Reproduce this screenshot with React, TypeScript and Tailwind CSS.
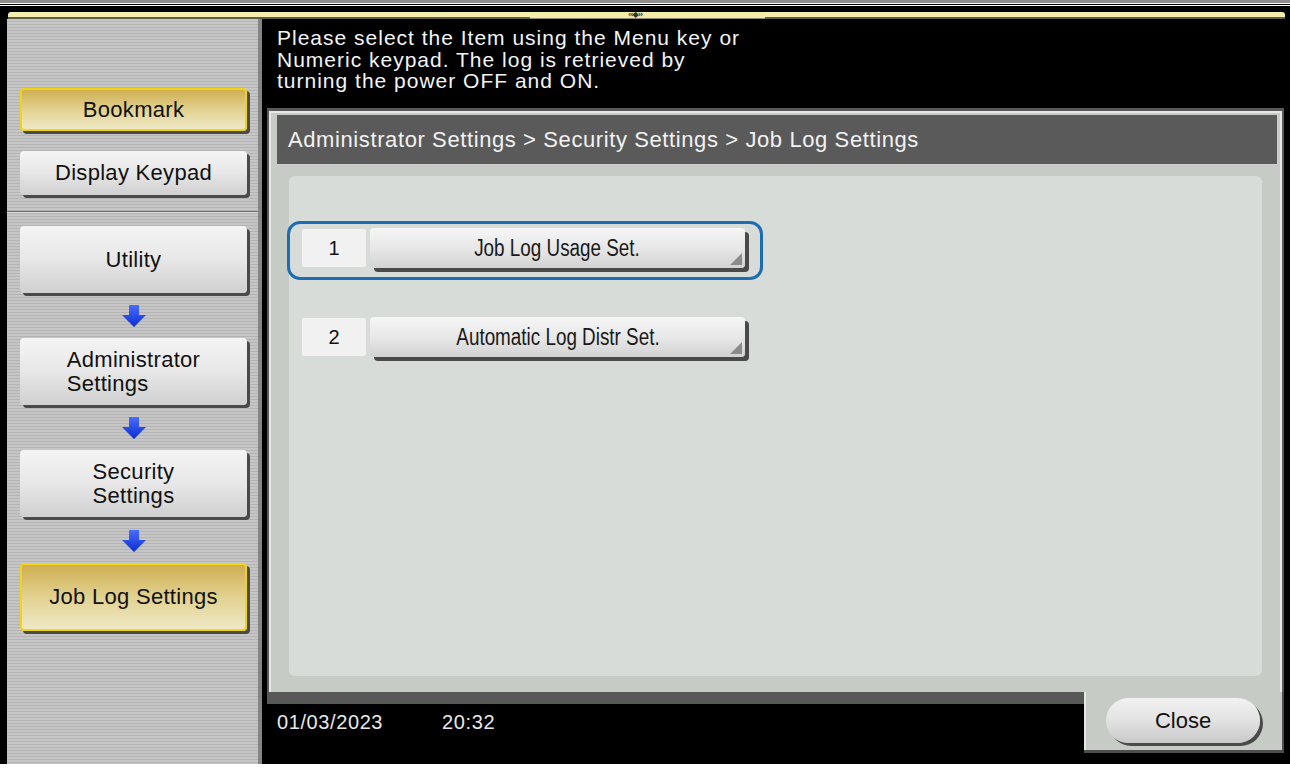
import React from 'react';

// left-hand navigation button (gray or highlighted yellow)
const NavButton = ({ children, yellow = false, h }: { children: React.ReactNode; yellow?: boolean; h: string }) => (
  <div
    className={`w-[227px] ${h} rounded-[4px] flex items-center justify-center text-[22px] leading-[24px] tracking-[0.3px] text-[#111] shadow-[3px_3px_0_#4a4a4a] ${
      yellow
        ? 'border-2 border-[#f2d417] bg-[linear-gradient(to_bottom,#cfae52_0%,#e2d290_50%,#eee8c6_100%)]'
        : 'bg-[linear-gradient(to_bottom,#f4f4f4_0%,#e7e7e7_50%,#d0d0d0_100%)]'
    }`}
  >
    {children}
  </div>
);

const DownArrow = () => (
  <div className="w-[227px] h-[45px] flex items-center justify-center">
    <svg width="24" height="22" viewBox="0 0 24 22">
      <defs>
        <linearGradient id="arr" x1="0" y1="0" x2="0" y2="1">
          <stop offset="0" stopColor="#4a6cff" />
          <stop offset="1" stopColor="#0a2ed0" />
        </linearGradient>
      </defs>
      <path d="M7 0h10v10h7L12 22 0 10h7z" fill="url(#arr)" />
    </svg>
  </div>
);

const ItemRow = ({ num, label, selected = false }: { num: string; label: string; selected?: boolean }) => (
  <div
    className={`-ml-[2px] w-[476px] h-[59px] rounded-[13px] border-[3px] flex items-start pl-[12px] pt-[4px] gap-[4px] ${
      selected ? 'border-[#1d6db4]' : 'border-transparent'
    }`}
  >
    <div className="mt-[1px] w-[64px] h-[38px] rounded-[2px] bg-[#f0f1f0] flex items-center justify-center text-[20px] text-[#111]">
      {num}
    </div>
    <div className="relative w-[375px] h-[40px] rounded-[4px] bg-[linear-gradient(to_bottom,#f6f6f6_0%,#e6e6e6_55%,#d2d2d2_100%)] shadow-[4px_4px_0_#4a4a4a] flex items-center justify-center">
      <span className="inline-block scale-x-[0.82] text-[23px] text-[#1a1a1a] whitespace-nowrap">{label}</span>
      <svg className="absolute right-[3px] bottom-[3px]" width="12" height="12" viewBox="0 0 12 12">
        <polygon points="12,0 12,12 0,12" fill="#8c8c8c" />
      </svg>
    </div>
  </div>
);

export default function App() {
  return (
    <div className="w-[1290px] h-[779px] bg-white overflow-hidden font-['Liberation_Sans',Arial,sans-serif]">
      {/* top edge lines */}
      <div className="h-[3px] bg-[#8e8e8e]" />
      <div className="h-px bg-white" />
      <div className="h-px bg-black" />
      <div className="h-px bg-white" />

      <div className="h-[758px] bg-black pl-[7px] pr-[6px] flex flex-col">
        {/* yellow strip with centre tab */}
        <div className="mt-[6px] ml-[1px] -mr-[1px] h-[7px] flex">
          <div className="w-[522px] flex flex-col">
            <div className="h-[5px] bg-[#f4efae] rounded-tl-[3px]" />
            <div className="h-[2px] bg-[#5f5d48]" />
          </div>
          <div className="relative w-[235px] flex flex-col">
            <div className="h-[6px] bg-[#f1eca8]" />
            <div className="h-px bg-[#8a8870]" />
            <span className="absolute left-[98px] -top-[2px] text-[8px] leading-[9px] font-bold text-[#333] font-['DejaVu_Sans',sans-serif] tracking-[-1px]">
              ‹‹◆››
            </span>
          </div>
          <div className="flex-1 flex flex-col">
            <div className="h-[5px] bg-[#f4efae] rounded-tr-[3px]" />
            <div className="h-[2px] bg-[#5f5d48]" />
          </div>
        </div>

        <div className="flex flex-1 min-h-0">
          {/* Left navigation */}
          <aside className="w-[255px] border-r-[4px] border-[#858585] bg-[repeating-linear-gradient(to_bottom,#c6c6c6_0px,#c6c6c6_2px,#b4b4b4_2px,#b4b4b4_3px)] flex flex-col pl-[13px] pt-[69px]">
            <NavButton yellow h="h-[43px]">Bookmark</NavButton>
            <div className="mt-[20px]">
              <NavButton h="h-[44px]">Display Keypad</NavButton>
            </div>
            <div className="-ml-[13px] mt-[16px] h-px bg-[#6a6a6a]" />
            <div className="-ml-[13px] h-px bg-[#e0e0e0]" />
            <div className="mt-[13px]">
              <NavButton h="h-[67px]">Utility</NavButton>
            </div>
            <DownArrow />
            <NavButton h="h-[67px]">
              <span className="text-left">Administrator<br />Settings</span>
            </NavButton>
            <DownArrow />
            <NavButton h="h-[67px]">
              <span className="text-left">Security<br />Settings</span>
            </NavButton>
            <div className="h-[1px]" />
            <DownArrow />
            <NavButton yellow h="h-[68px]">Job Log Settings</NavButton>
          </aside>

          {/* Right side */}
          <main className="flex-1 pl-[5px] flex flex-col">
            <div className="h-[89px] pt-[8px] pl-[10px] text-[21px] leading-[21.5px] tracking-[1px] text-[#f4f4f4]">
              <p>Please select the Item using the Menu key or</p>
              <p>Numeric keypad. The log is retrieved by</p>
              <p>turning the power OFF and ON.</p>
            </div>

            <section className="h-[584px] bg-[#c6cbc6] border-t-[3px] border-x-2 border-[#5a5a5a] shadow-[inset_2px_2px_0_#e6e8e6,inset_-2px_0_0_#e6e8e6] flex flex-col">
              <div className="mt-[4px] ml-[8px] mr-[4px] h-[50px] bg-[#5a5a5a] border-r border-b border-[#cfcfcf] flex items-center pl-[11px] text-[22px] tracking-[0.6px] text-[#f2f2f2]">
                Administrator Settings &gt; Security Settings &gt; Job Log Settings
              </div>
              <div className="mt-[11px] mx-[20px] h-[500px] rounded-[6px] bg-[#d7dcd8] pt-[45px] flex flex-col">
                <ItemRow num="1" label="Job Log Usage Set." selected />
                <div className="mt-[30px]">
                  <ItemRow num="2" label="Automatic Log Distr Set." />
                </div>
              </div>
            </section>

            <div className="h-[72px] flex items-start">
              <div className="flex-1 h-full border-t-[12px] border-[#585858] bg-black pl-[10px] pt-[7px] flex text-[20px] leading-[23px] tracking-[0.6px] text-[#e8e8e8]">
                <span>01/03/2023</span>
                <span className="ml-[59px]">20:32</span>
              </div>
              <div className="w-[200px] h-[61px] bg-[#c6cbc6] border-r-2 border-b-[3px] border-[#4e4e4e] shadow-[inset_2px_0_0_#e6e8e6] pl-[22px] pt-[6px]">
                <div className="w-[154px] h-[45px] rounded-full bg-[linear-gradient(to_bottom,#f2f2f2_0%,#e2e2e2_50%,#c9c9c9_100%)] shadow-[3px_3px_0_#4a4a4a] flex items-center justify-center text-[22px] text-[#111]">
                  Close
                </div>
              </div>
            </div>
          </main>
        </div>
      </div>
    </div>
  );
}
